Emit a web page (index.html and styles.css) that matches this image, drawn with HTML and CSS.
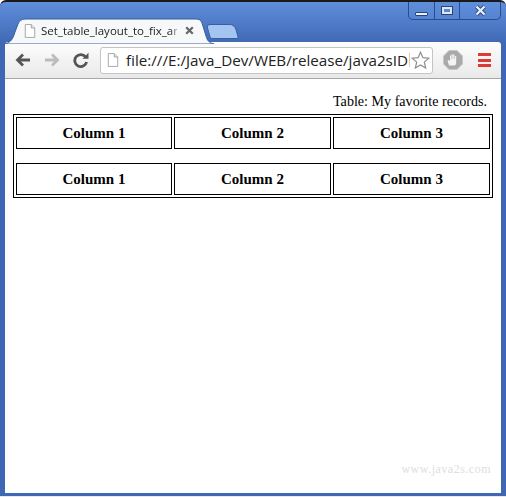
FILE: index.html
```html
<!DOCTYPE html>
<html lang="en">
<head>
    <meta charset="UTF-8">
    <title>Set_table_layout_to_fix_and</title>
    <link rel="stylesheet" href="styles.css">
</head>
<body>
    <div class="window">
        <div class="tabstrip">
            <div class="tab">
                <svg class="tab-shape" width="212" height="26" viewBox="0 0 212 26">
                    <path d="M2 26 C8 24 10 21 12 14 L15 6 C17 2 19 1 24 1 L192 1 C196 1 198 2 199 5 L203 18 C204 22 206 25 211 26 Z" fill="#f7f8fa" stroke="#3a5f9e" stroke-width="1"/>
                </svg>
                <svg class="page-icon" width="12" height="14" viewBox="0 0 14 16">
                    <path d="M1.5 .5 H8.5 L12.5 4.5 V15.5 H1.5 Z" fill="#fff" stroke="#9a9a9a"/>
                    <path d="M8.5 .5 V4.5 H12.5" fill="#e8e8e8" stroke="#9a9a9a"/>
                </svg>
                <span class="tab-title">Set_table_layout_to_fix_an</span>
                <svg class="tab-close" width="9" height="9" viewBox="0 0 9 9">
                    <path d="M1.2 1.2 L7.8 7.8 M7.8 1.2 L1.2 7.8" stroke="#666" stroke-width="2.2"/>
                </svg>
            </div>
            <div class="new-tab"></div>
            <div class="win-controls">
                <div class="win-btn win-min"><span class="min-bar"></span></div>
                <div class="win-btn win-max"><span class="max-box"></span></div>
                <div class="win-btn win-close">
                    <svg width="13" height="11" viewBox="0 0 13 11">
                        <path d="M2.5 1.5 L10.5 9.5 M10.5 1.5 L2.5 9.5" stroke="#26457f" stroke-width="4"/>
                        <path d="M2.5 1.5 L10.5 9.5 M10.5 1.5 L2.5 9.5" stroke="#e8eef8" stroke-width="2.4"/>
                    </svg>
                </div>
            </div>
        </div>

        <div class="toolbar">
            <svg class="nav-icon" width="16" height="14" viewBox="0 0 16 14">
                <path d="M15 7 H3 M8 1.5 L2.5 7 L8 12.5" fill="none" stroke="#555" stroke-width="2.8"/>
            </svg>
            <svg class="nav-icon fwd" width="16" height="14" viewBox="0 0 16 14">
                <path d="M1 7 H13 M8 1.5 L13.5 7 L8 12.5" fill="none" stroke="#bcbcbc" stroke-width="2.8"/>
            </svg>
            <svg class="nav-icon reload" width="16" height="16" viewBox="0 0 16 16">
                <path d="M12.6 5 A6 6 0 1 0 13.6 10" fill="none" stroke="#555" stroke-width="2.8"/>
                <path d="M9.5 6.8 H15.5 V.8 Z" fill="#555"/>
            </svg>
            <div class="omnibox">
                <svg class="page-icon" width="12" height="14" viewBox="0 0 14 16">
                    <path d="M1.5 .5 H8.5 L12.5 4.5 V15.5 H1.5 Z" fill="#fff" stroke="#9a9a9a"/>
                    <path d="M8.5 .5 V4.5 H12.5" fill="#e8e8e8" stroke="#9a9a9a"/>
                </svg>
                <span class="url">file:///E:/Java_Dev/WEB/release/java2sID</span>
                <span class="url-fade"></span>
                <svg class="star" width="19" height="18" viewBox="0 0 19 18">
                    <path d="M9.5 1.2 L11.9 6.7 L17.9 7.2 L13.3 11.1 L14.7 17 L9.5 13.9 L4.3 17 L5.7 11.1 L1.1 7.2 L7.1 6.7 Z" fill="#fff" stroke="#8f8f8f" stroke-width="1.2"/>
                </svg>
            </div>
            <svg class="adblock" width="20" height="20" viewBox="0 0 20 20">
                <path d="M6 .5 H14 L19.5 6 V14 L14 19.5 H6 L.5 14 V6 Z" fill="#a9a9a9" stroke="#c8c8c8"/>
                <path d="M6 15.5 L4.5 10.5 L6 10 L7 11.5 V5.5 H8 V9 H8.5 V4.2 H9.8 V9 H10.2 V4.6 H11.5 V9 H12 V6 H13.2 V12 C13.2 14 12.5 15.5 11.5 15.5 Z" fill="#f4f4f4"/>
            </svg>
            <div class="menu-icon">
                <span></span>
                <span></span>
                <span></span>
            </div>
        </div>

        <div class="content">
            <table class="records">
                <caption>Table: My favorite records.</caption>
                <tr>
                    <th>Column 1</th>
                    <th>Column 2</th>
                    <th>Column 3</th>
                </tr>
                <tr class="spacer">
                    <td colspan="3"></td>
                </tr>
                <tr>
                    <th>Column 1</th>
                    <th>Column 2</th>
                    <th>Column 3</th>
                </tr>
            </table>
            <div class="watermark">www.java2s.com</div>
        </div>
    </div>
</body>
</html>
```

FILE: styles.css
```css
html, body {
    margin: 0;
    padding: 0;
    height: 100%;
    background: #fff;
}

.window {
    box-sizing: border-box;
    height: 497px;
    display: flex;
    flex-direction: column;
    padding: 0 5px 3px 5px;
    border-top: 2px solid #1a1a1a;
    border-bottom: 1px solid #e8e8e8;
    border-radius: 6px 6px 0 0;
    background: linear-gradient(to bottom, #5f8edb 0, #3f68b4 42px, #3f68b4 100%);
    overflow: hidden;
}

.tabstrip {
    height: 40px;
    display: flex;
    align-items: flex-end;
    flex-shrink: 0;
}

.tab {
    position: relative;
    width: 203px;
    height: 25px;
    display: flex;
    align-items: center;
    padding-left: 19px;
    box-sizing: border-box;
    margin-bottom: -1px;
    z-index: 1;
}

.tab-shape {
    position: absolute;
    left: -2px;
    top: 0;
}

.page-icon {
    flex-shrink: 0;
}

.tab .page-icon {
    position: relative;
    margin-top: 1px;
}

.tab-title {
    position: relative;
    width: 136px;
    margin-left: 5px;
    white-space: nowrap;
    font: 11.5px "Open Sans", sans-serif;
    color: #222;
    -webkit-mask-image: linear-gradient(to right, #000 95%, rgba(0,0,0,0.35) 100%);
    mask-image: linear-gradient(to right, #000 95%, rgba(0,0,0,0.35) 100%);
}

.tab-close {
    position: relative;
    margin-left: 8px;
}

.new-tab {
    width: 29px;
    height: 15px;
    margin: 0 0 3px 0;
    background: #a5c5f1;
    border: 1px solid #3a5f9e;
    border-radius: 4px 5px 2px 2px;
    transform: skewX(16deg);
    box-sizing: border-box;
}

.win-controls {
    display: flex;
    align-self: flex-start;
    height: 18px;
    margin-left: auto;
    border: 1px solid #2a4c8a;
    border-top: 0;
    border-radius: 0 0 5px 5px;
    box-sizing: border-box;
    background: linear-gradient(to bottom, #5f8edb, #5583d0);
}

.win-btn {
    display: flex;
    align-items: center;
    justify-content: center;
    border-left: 1px solid #2a4c8a;
}

.win-min {
    width: 25px;
    border-left: 0;
}

.win-max {
    width: 24px;
}

.win-close {
    width: 40px;
}

.min-bar {
    width: 11px;
    height: 2px;
    margin-top: 6px;
    background: #e8eef8;
    border: 1px solid #26457f;
    border-radius: 1px;
}

.max-box {
    width: 6px;
    height: 3px;
    border: 2px solid #dfe7f5;
    outline: 1px solid #26457f;
}

.toolbar {
    height: 37px;
    display: flex;
    align-items: center;
    flex-shrink: 0;
    padding-left: 10px;
    box-sizing: border-box;
    background: linear-gradient(to bottom, #fdfdfd, #e9e9e9);
    border-bottom: 1px solid #a8a8a8;
    border-radius: 3px 3px 0 0;
}

.nav-icon {
    margin-right: 13px;
}

.nav-icon.reload {
    margin-right: 11px;
}

.omnibox {
    width: 333px;
    height: 27px;
    display: flex;
    align-items: center;
    box-sizing: border-box;
    padding: 0 2px 0 6px;
    background: #fff;
    border: 1px solid #c4c4c4;
    border-radius: 3px;
}

.url {
    margin-left: 7px;
    white-space: nowrap;
    font: 15.2px "Open Sans", sans-serif;
    color: #222;
}

.url-fade {
    flex-shrink: 0;
    width: 1px;
    height: 14px;
    margin-left: 1px;
    background: #f2c88a;
}

.star {
    flex-shrink: 0;
    margin-left: auto;
}

.adblock {
    margin-left: 10px;
}

.menu-icon {
    display: flex;
    flex-direction: column;
    gap: 2.5px;
    margin-left: 15px;
}

.menu-icon span {
    width: 13px;
    height: 3px;
    background: #dd3a33;
}

.content {
    position: relative;
    flex: 1;
    background: #fff;
    padding: 8px;
}

.records {
    width: 100%;
    table-layout: fixed;
    border: 1px solid #000;
    border-spacing: 2px;
    font: 15px "Liberation Serif", serif;
    color: #000;
}

.records caption {
    text-align: right;
    padding: 6px 6px 0 0;
    font: 14.1px "Liberation Serif", serif;
    height: 21px;
}

.records th {
    height: 20px;
    border: 1px solid #000;
    padding: 5px 6px;
    text-align: center;
}

.records th:first-child {
    width: 142px;
}

.spacer td {
    height: 10px;
    padding: 0;
}

.watermark {
    position: absolute;
    right: 10px;
    bottom: 16px;
    font: 12px "Liberation Serif", serif;
    letter-spacing: 0.5px;
    color: #dedede;
}
```
